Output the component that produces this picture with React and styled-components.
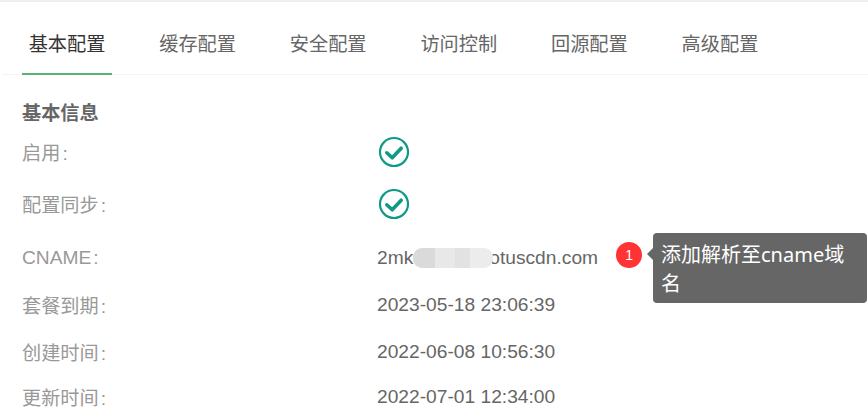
import styled, { createGlobalStyle } from "styled-components";

const GlobalStyle = createGlobalStyle`
body {
    margin: 0;
    background: #fff;
    font-family: "Liberation Sans", "Noto Sans CJK SC", sans-serif;
    font-size: 19.2px;
    overflow: hidden;
}
`

const Page = styled.div`
height: 419px;
overflow: hidden;
border-top: 2px solid #eeeeee;
box-sizing: border-box;
`

const Tabs = styled.div`
display: flex;
gap: 40.6px;
margin-left: 2px;
padding-left: 20px;
height: 72px;
border-bottom: 1px solid #f3f3f3;
`

const Tab = styled.div`
width: 90px;
text-align: center;
box-sizing: border-box;
line-height: 85px;
height: 73px;
color: ${(props) => (props.$active ? "#333333" : "#666666")};
border-bottom: ${(props) => (props.$active ? "2px solid #5bb174" : "none")};
white-space: nowrap;
`

const Section = styled.div`
padding: 27px 0 0 22px;
`

const Title = styled.h3`
margin: 0;
font-size: 19.2px;
font-weight: bold;
line-height: 24px;
color: #666666;
`

const Row = styled.div`
display: flex;
align-items: center;
height: ${(props) => props.$h}px;
margin-top: ${(props) => props.$top || 0}px;
`

const Label = styled.div`
width: 355px;
flex-shrink: 0;
color: #999999;
white-space: nowrap;
`

const Colon = styled.span`
margin-left: 2px;
`

const Value = styled.div`
color: #666666;
display: flex;
align-items: center;
white-space: nowrap;
`

// covers the start of the text behind it, so it sits above with a negative margin
const Blurred = styled.span`
position: relative;
z-index: 1;
display: inline-block;
width: 80px;
height: 20px;
margin-right: -4px;
border-radius: 9px;
background: linear-gradient(90deg, #dadada 0 27%, #e8e8e8 27% 52%, #e2e2e2 52% 71%, #ececec 71% 100%);
`

const Badge = styled.span`
width: 26px;
height: 26px;
border-radius: 50%;
background: #ff3333;
color: #fff;
font-size: 14px;
line-height: 26px;
text-align: center;
margin: 0 0 5px 18px;
flex-shrink: 0;
`

const Tip = styled.div`
position: absolute;
left: 653px;
top: 233px;
width: 214px;
height: 70px;
box-sizing: border-box;
padding: 7px 8px;
border-radius: 4px;
background: #666666;
color: #fff;
font-family: "Noto Sans", "Noto Sans CJK SC", sans-serif;
font-size: 20px;
line-height: 29px;
&::before {
    content: "";
    position: absolute;
    left: -6px;
    top: 15px;
    border-top: 6px solid transparent;
    border-bottom: 6px solid transparent;
    border-right: 6px solid #666666;
}
`

const Check = styled.svg`
display: block;
margin-left: 1px;
`

function CheckIcon() {
    return (
        <Check width="32" height="32" viewBox="0 0 32 32" fill="none">
            <circle cx="16" cy="16" r="14" stroke="#0f9a88" strokeWidth="2.2" />
            <path d="M8.8 16.8l5.4 5 9-9.6" stroke="#0f9a88" strokeWidth="3.6" strokeLinecap="round" strokeLinejoin="round" />
        </Check>
    )
}

const tabs = ["基本配置", "缓存配置", "安全配置", "访问控制", "回源配置", "高级配置"]

export default function App() {
    return (
        <Page>
            <GlobalStyle />
            <Tabs>
                {tabs.map((tab, index) => (
                    <Tab key={tab} $active={index === 0}>{tab}</Tab>
                ))}
            </Tabs>
            <Section>
                <Title>基本信息</Title>
                <Row $h={52}>
                    <Label>启用<Colon>:</Colon></Label>
                    <Value><CheckIcon /></Value>
                </Row>
                <Row $h={52}>
                    <Label>配置同步<Colon>:</Colon></Label>
                    <Value><CheckIcon /></Value>
                </Row>
                <Row $h={45} $top={5}>
                    <Label>CNAME<Colon>:</Colon></Label>
                    <Value>
                        2mk<Blurred />otuscdn.com
                        <Badge>1</Badge>
                    </Value>
                </Row>
                <Row $h={49}>
                    <Label>套餐到期<Colon>:</Colon></Label>
                    <Value>2023-05-18 23:06:39</Value>
                </Row>
                <Row $h={45}>
                    <Label>创建时间<Colon>:</Colon></Label>
                    <Value>2022-06-08 10:56:30</Value>
                </Row>
                <Row $h={46}>
                    <Label>更新时间<Colon>:</Colon></Label>
                    <Value>2022-07-01 12:34:00</Value>
                </Row>
            </Section>
            <Tip>添加解析至cname域名</Tip>
        </Page>
    )
}
